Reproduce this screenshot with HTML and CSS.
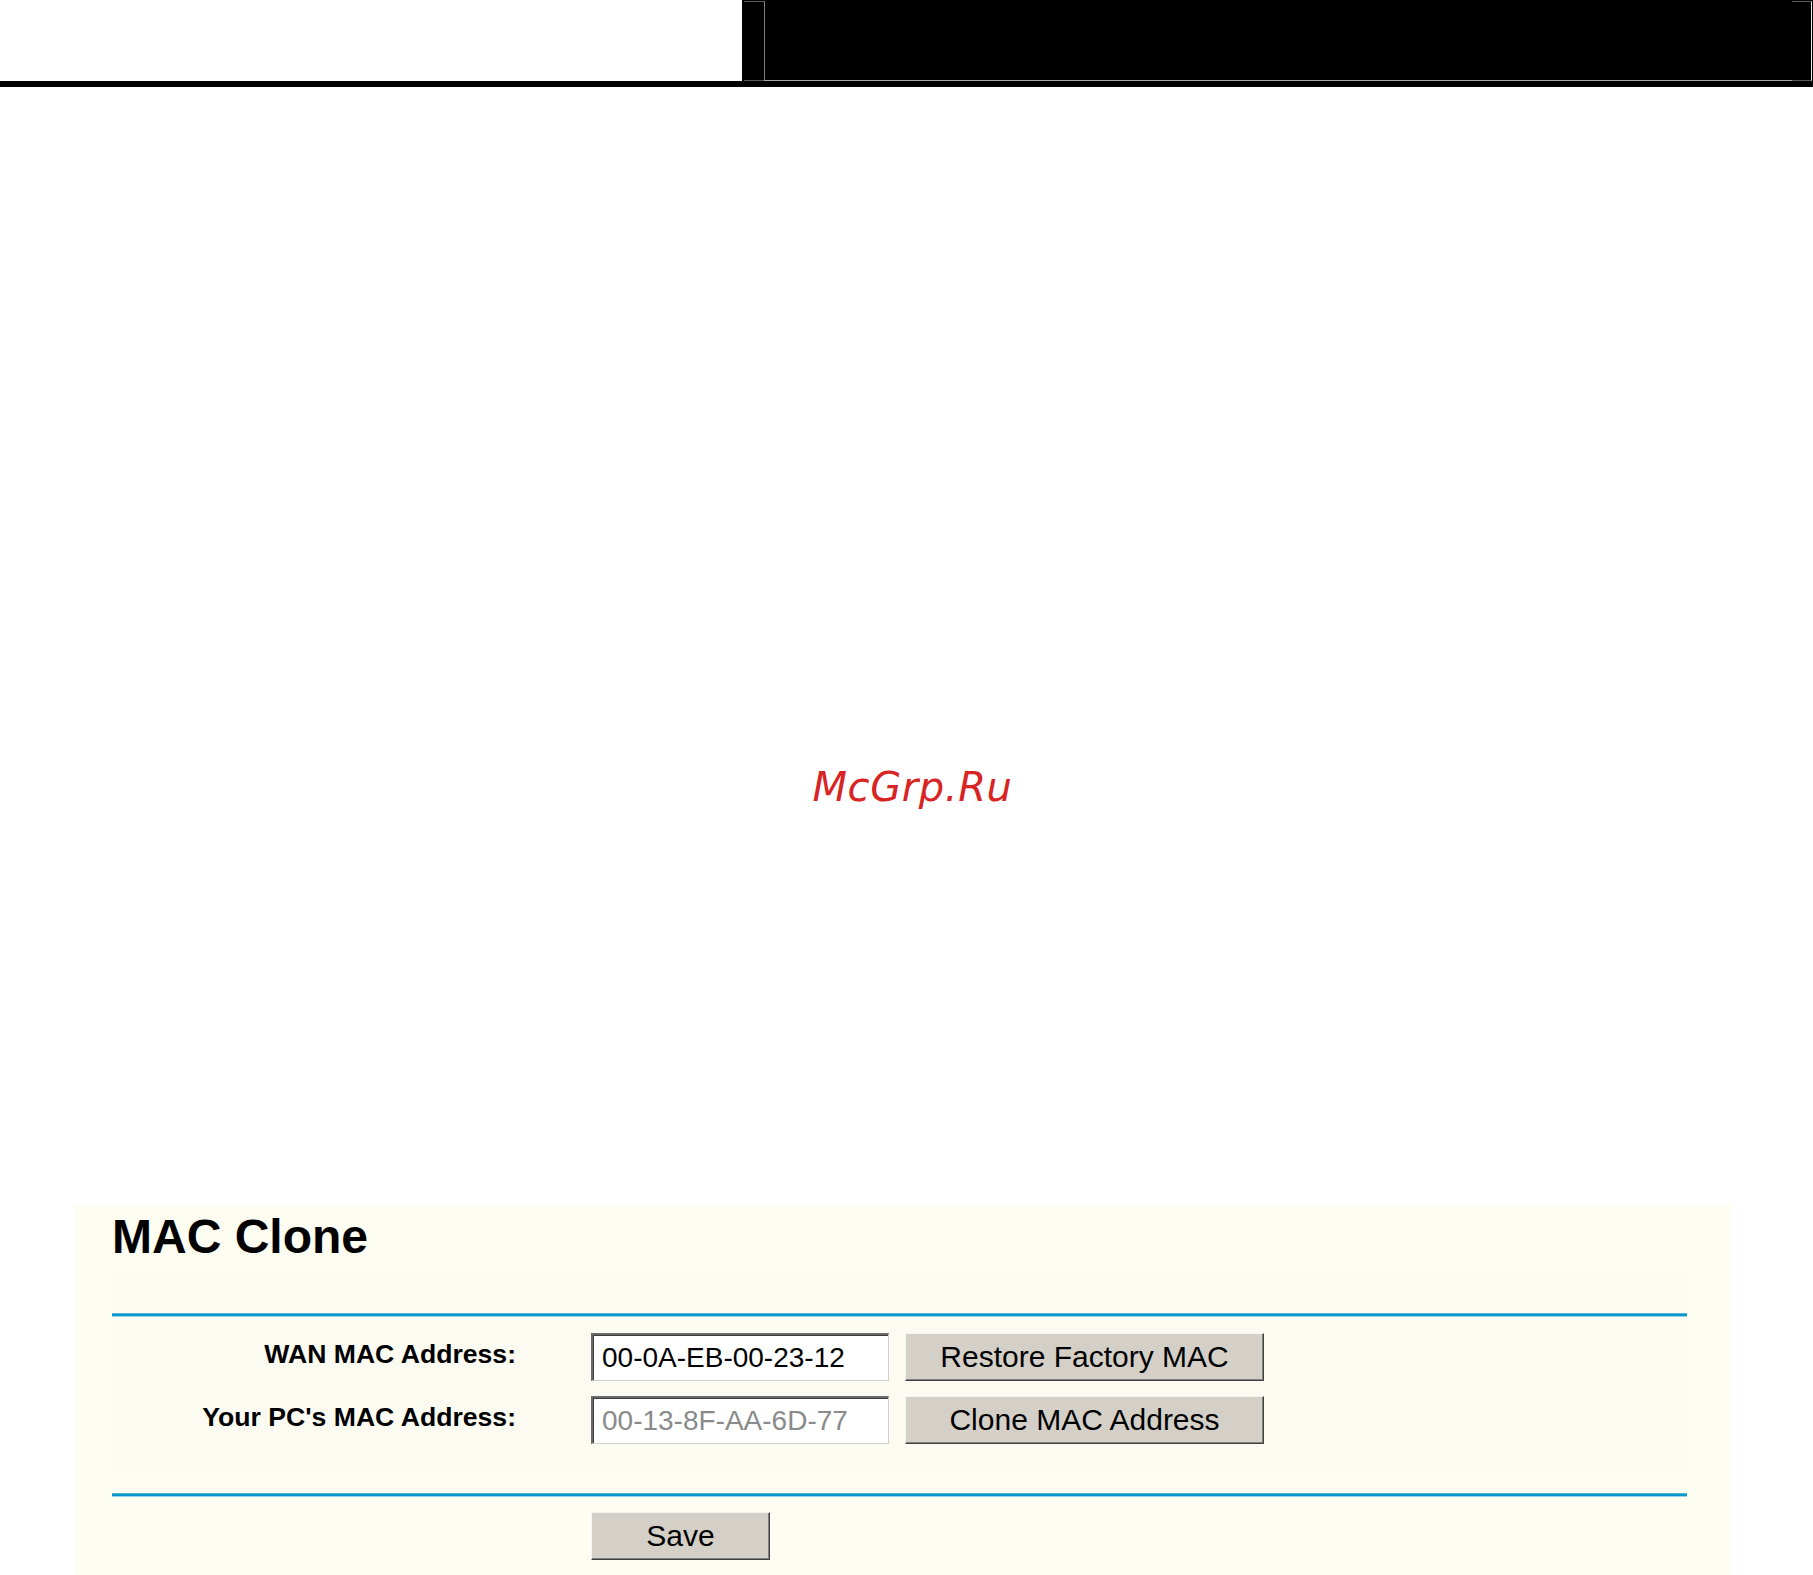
FILE: index.html
```html
<!DOCTYPE html>
<html lang="en">
<head>
<meta charset="utf-8">
<title>MAC Clone</title>
<link rel="stylesheet" href="styles.css">
</head>
<body>
<header class="topbar">
  <div class="logo-area"></div>
  <div class="banner">
    <div class="cap cap-l"></div>
    <div class="banner-mid"></div>
    <div class="cap cap-r"></div>
  </div>
</header>
<div class="rule"></div>

<main class="stage">
  <p class="watermark">McGrp.Ru</p>
</main>

<section class="panel">
  <h1 class="panel-title">MAC Clone</h1>
  <div class="content">
    <div class="band">
      <div class="blue-line"></div>
      <form class="mac-grid">
        <label class="field-label">WAN MAC Address:</label>
        <input class="mac-input" type="text" value="00-0A-EB-00-23-12">
        <button class="btn btn-wide" type="button">Restore Factory MAC</button>
        <label class="field-label">Your PC's MAC Address:</label>
        <input class="mac-input muted" type="text" value="00-13-8F-AA-6D-77" readonly>
        <button class="btn btn-wide" type="button">Clone MAC Address</button>
      </form>
    </div>
    <div class="blue-line blue-line-2"></div>
    <div class="save-row">
      <button class="btn btn-save" type="button">Save</button>
    </div>
  </div>
</section>
</body>
</html>
```

FILE: styles.css
```css
html, body {
  margin: 0;
  padding: 0;
  background: #ffffff;
}

body {
  width: 1813px;
  font-family: "Liberation Sans", Arial, sans-serif;
  color: #000;
}

/* ---------- top header ---------- */
.topbar {
  display: flex;
  height: 81px;
}

.logo-area {
  width: 742px;
  background: #ffffff;
}

.banner {
  flex: 1;
  background: #000;
  display: flex;
  padding: 1px 1px 0 2px;
  box-sizing: border-box;
}

.cap {
  width: 20px;
  height: 80px;
  box-sizing: border-box;
  border-top: 1px solid #5a5a5a;
  border-bottom: 1px solid #5a5a5a;
}

.cap-r {
  border-right: 1px solid #e6e6e6;
}

.banner-mid {
  flex: 1;
  height: 80px;
  box-sizing: border-box;
  border-left: 1px solid #7c7c7c;
  border-bottom: 1px solid #a9a9a9;
}

.rule {
  height: 6px;
  background: #000;
}

/* ---------- watermark area ---------- */
.stage {
  height: 1118px;
  box-sizing: border-box;
  padding: 680px 0 0 12px;
  text-align: center;
}

.watermark {
  margin: 0;
  font-family: "DejaVu Sans", sans-serif;
  font-style: italic;
  font-size: 40px;
  line-height: 40px;
  letter-spacing: 0.6px;
  color: #d92424;
}

/* ---------- panel ---------- */
.panel {
  margin-left: 74px;
  width: 1658px;
  height: 370px;
  box-sizing: border-box;
  padding-top: 8px;
  background: #fdfdf1;
  overflow: hidden;
}

.panel-title {
  margin: 0;
  padding-left: 38px;
  font-size: 48px;
  line-height: 48px;
  font-weight: bold;
}

.content {
  margin: 12px 0 0 38px;
  width: 1575px;
}

.band {
  background: #fbfbf2;
  padding: 40px 0 29px;
}

.blue-line {
  height: 2px;
  background: #0799cc;
  border-top: 1px solid #4fb3da;
  border-bottom: 1px solid #97d3ea;
}

.blue-line-2 {
  margin-top: 20px;
}

.mac-grid {
  margin: 16px 0 0;
  display: grid;
  grid-template-columns: 404px 298px 359px;
  grid-auto-rows: 48px;
  column-gap: 75px;
  row-gap: 15px;
}

.mac-grid .btn-wide {
  margin-left: -59px;
}

.field-label {
  text-align: right;
  font-weight: bold;
  font-size: 26.6px;
  line-height: 27px;
  padding-top: 8px;
}

.mac-input {
  width: 298px;
  height: 48px;
  box-sizing: border-box;
  margin: 0;
  padding: 0 0 0 9px;
  font-family: "Liberation Sans", Arial, sans-serif;
  font-size: 28px;
  color: #000;
  background: #ffffff;
  border-top: 2px solid #6a6a6a;
  border-left: 2px solid #6a6a6a;
  border-right: 1px solid #d4d0c8;
  border-bottom: 1px solid #d4d0c8;
  box-shadow: inset 1px 1px 0 #3c3c3c;
  outline: none;
}

.mac-input.muted {
  color: #8a8a8a;
}

.btn {
  height: 48px;
  box-sizing: border-box;
  margin: 0;
  padding: 0;
  font-family: "Liberation Sans", Arial, sans-serif;
  font-size: 30px;
  color: #000;
  background: #d4d0c8;
  border-top: 1px solid #f4f4f4;
  border-left: 1px solid #f4f4f4;
  border-right: 1px solid #404040;
  border-bottom: 1px solid #404040;
  box-shadow: inset -1px -1px 0 #808080;
  cursor: default;
}

.btn-wide {
  width: 359px;
}

.save-row {
  padding: 15px 0 0 479px;
}

.btn-save {
  width: 179px;
}
```
